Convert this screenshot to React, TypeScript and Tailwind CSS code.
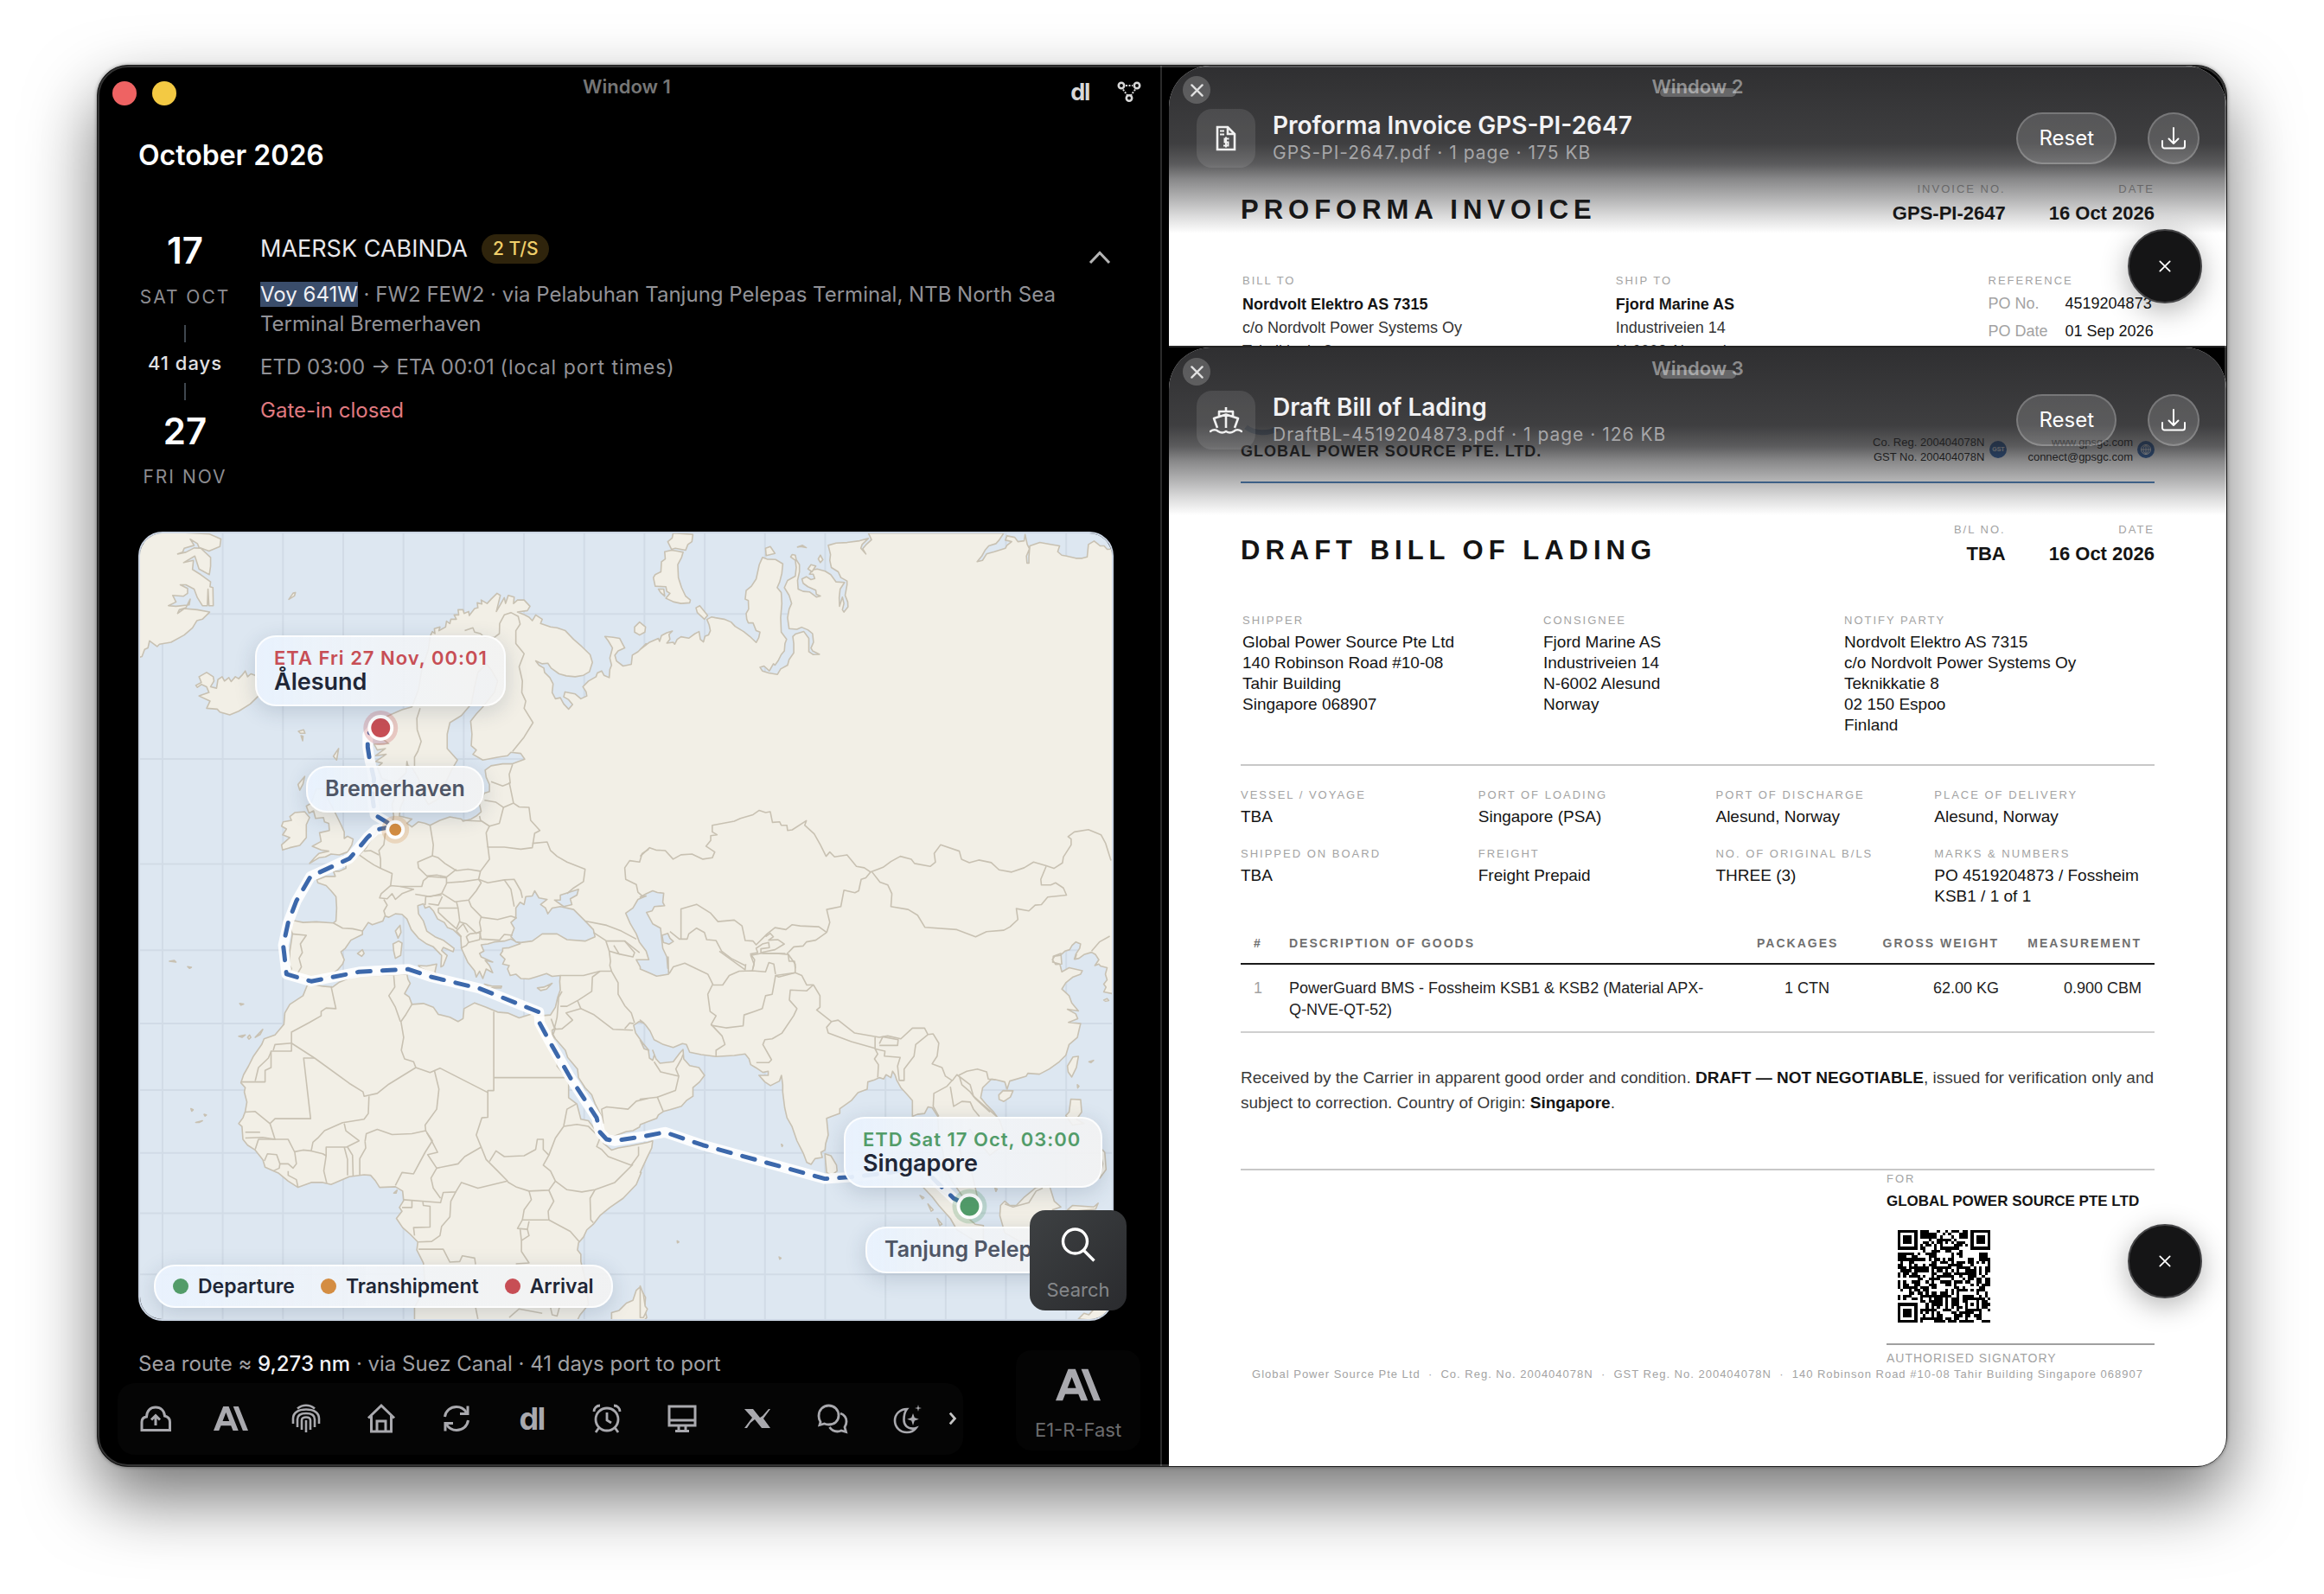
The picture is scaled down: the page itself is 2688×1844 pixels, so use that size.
import React from "react";
import { SiAnthropic } from "react-icons/si";

/* ------------------------------------------------------------------ */
/* Map geometry                                                        */
/* ------------------------------------------------------------------ */

/* The chart is traced on four overlapping sheets; each has an origin and a scale. */
const SHEETS: Record<string, [number, number, number, number]> = {
  A: [-10, -15, 600 / 1568, 1 / 3],
  B: [580, -15, 570 / 1568, 1 / 3],
  C: [-10, 485, 600 / 1568, 1 / 3],
  D: [580, 485, 600 / 1568, 1 / 3],
};

function trace(src: string, close = false): string {
  let sheet = SHEETS.A;
  const out: string[] = [];
  for (const tok of src.trim().split(/\s+/)) {
    if (SHEETS[tok]) {
      sheet = SHEETS[tok];
      continue;
    }
    const [x, y] = tok.split(",").map(Number);
    out.push((sheet[0] + x * sheet[2]).toFixed(1) + " " + (sheet[1] + y * sheet[3]).toFixed(1));
  }
  return "M" + out.join("L") + (close ? "Z" : "");
}

const LAND = [
  // Eurasia and Africa
  `A 905,405 912,388 920,395 918,378 935,372 932,385 952,372 955,352 965,360 968,345 985,345 978,330 992,330 990,312 1005,312 1008,325 1022,318 1024,332 1040,308 1050,305 1048,288 1062,292 1060,278 1078,290 1090,275 1108,255 1118,262 1112,290 1106,318 1120,290 1130,270 1134,290 1142,262 1160,268 1158,290 1170,278 1190,278 1208,300 1200,315 1170,320 1188,328 1205,338 1215,350 1225,330 1245,345 1240,360 1270,372 1290,375 1315,385 1340,415 1365,440 1390,468 1397,495 1388,528 1370,540 1345,545 1318,542 1296,535 1272,515 1262,498 1245,500 1225,490 1235,505 1250,515 1252,530 1268,548 1278,570 1275,600 1285,622 1300,618 1310,640 1325,658 1337,642 1325,625 1310,615 1314,598 1345,605 1362,622 1380,612 1378,598 1368,580 1385,560 1408,545 1412,532 1425,525 1432,540 1448,548 1450,520 1455,505 1450,480 1458,445 1445,420 1435,405 1460,408 1480,412 1488,430 1495,445 1475,455 1465,470 1470,490 1490,508 1515,502 1518,470 1535,458 1560,430
   B 0,450 30,425 58,412 62,422 68,402 85,392 103,386 92,398 95,415 85,428 105,425 110,432 118,415 130,406 155,411 175,395 188,388 192,415 202,424 207,404 218,400 224,385 220,365 213,346 228,337 240,340 268,345 290,355 303,370 330,388 350,405 370,426 378,410 382,390 370,385 360,358 345,358 340,345 338,325 346,310 345,280 335,275 338,245 355,230 370,205 380,155 390,130 405,136 432,137 455,152 452,185 445,215 437,235 450,252 452,290 448,340 450,390 467,415 462,430 460,455 450,468 440,490 430,505 425,500 412,525 395,508 382,512 390,525 410,532 438,537 448,518 470,505 475,485 490,462 490,430 487,405 495,397 522,388 538,412 538,458 552,468 572,467 550,455 545,445 553,425 550,395 535,382 515,373 500,380 475,378 470,340 475,310 483,290 475,262 460,235 470,210 495,195 498,165 495,140 480,128 485,120 495,122 498,138 508,155 508,180 502,210 504,240 520,248 540,250 562,268 575,264 562,258 560,244 535,232 520,220 516,205 530,197 545,207 557,203 552,188 540,188 550,173 565,170 590,178 608,190 625,215 652,217 638,240 635,270 636,300 645,268 650,290 645,312 650,320 663,302 662,285 654,262 660,225 660,212 640,200 632,180 610,165 605,140 607,120 600,88 625,80 660,78 700,72 728,64 708,85 704,98 720,118 710,100 722,84 738,68 728,45
   1160,45 1145,70 1135,82 1112,90 1100,105 1090,125 1075,145 1092,140 1105,118 1130,110 1165,98 1170,88 1185,75 1165,70 1170,55 1195,60 1205,75 1225,72 1228,50 1235,85 1242,100 1232,125 1234,150 1240,150 1240,128 1243,90 1275,78 1305,84 1338,90 1332,110 1345,122 1360,125 1390,133 1410,133 1426,128 1430,85 1448,73 1468,90 1480,90 1490,102 1520,100 1520,1450
   D 1440,150 1405,142 1412,125 1405,115 1415,100 1410,80 1415,58 1395,52 1390,45 1378,50 1390,30 1380,12 1368,4 1345,12 1330,25 1318,28 1322,12
   B 1385,1528 1390,1510 1402,1490 1405,1475 1390,1468 1378,1480 1370,1495 1355,1500 1340,1515 1322,1518 1315,1530 1325,1546 1345,1545
   D 1275,8 1252,18 1250,38 1272,45 1278,72 1300,58 1340,68 1335,80 1312,90 1290,110 1278,132 1300,155 1308,180 1328,208 1295,202 1320,218 1326,235 1298,248 1335,252 1330,275 1325,300 1300,325 1290,362 1270,385 1240,410 1210,428 1175,425 1170,435 1120,452 1112,480 1105,455 1080,448 1065,445 1038,475 1032,510 1050,535 1070,558 1090,590 1105,640 1095,680 1060,710 1045,690 1020,660 1000,620 978,640 968,690 980,740 1005,770 1015,820 1025,870 1000,880 975,850 945,800 925,760 918,700 905,650 902,575 885,545 872,542 862,565 840,568 825,575 825,520 810,500 790,475 778,450 772,430 765,418 760,440 745,430 738,445 725,440 710,448 690,455 688,480 660,492 640,520 605,548 605,565 580,575 565,582 570,640 562,670 560,692 548,700 552,718 530,722 518,742 505,735 495,705 475,660 460,610 445,580 438,545 432,490 432,465 428,432 422,452 395,468 378,455 360,432 388,432 388,418 372,422 350,405 335,395 330,375 318,358 285,363 230,367 185,360 150,352 140,325 128,322 100,335 70,325 42,308 30,278 15,255 0,240
   C 1553,250 1538,245 1522,258 1528,285 1550,320 1568,345
   D 0,310 12,340 25,345 28,372 38,380 43,360 38,345 48,375 60,390 100,385 120,355 130,342 132,375 150,398 178,405 195,432 180,455 160,475 160,505 140,520 125,540 110,545 90,552 70,558 55,570 50,582 20,595 0,604
   C 1540,612 1520,625 1500,628 1460,645 1435,640 1425,610 1425,575 1405,530 1395,500 1375,475 1355,440 1352,410 1322,370 1315,345 1285,305 1278,290 1285,268 1275,275 1276,295 1290,340 1292,375 1290,400 1315,435 1325,460 1325,510 1350,532 1362,585 1385,590 1405,620 1430,648 1430,668 1455,692 1475,685 1510,678 1565,665
   D 38,660 35,685 20,720 0,770
   C 1545,770 1530,812 1490,860 1450,892 1420,920 1400,950 1380,970 1370,995 1355,1015 1352,1040 1362,1055 1362,1080 1375,1140 1385,1230 1360,1265 1340,1310 858,1310 858,1240 890,1170 885,1085 865,1040 868,1012 845,985 822,962 803,930 820,905 812,892 825,868 822,835 800,820 752,822 740,800 725,780 705,778 660,785 605,812 580,805 545,805 505,822 475,800 445,772 405,752 398,725 375,692 352,675 338,655 335,610 325,600 338,580 345,558 350,525 342,490 345,475 332,458 340,430 355,400 370,365 395,325 402,305 435,292 462,255 465,215 480,185 520,155 533,118 560,118 580,122 610,125 630,108 655,96 690,85 740,85 800,82 835,80 838,98 845,112 828,148 842,160 850,185 885,182 915,195 930,220 965,230 990,245 1005,235 1008,200 1040,180 1075,195 1110,212 1140,215 1175,232 1215,218 1240,225 1270,222 1285,195 1292,160 1300,135 1298,105 1300,85 1275,88 1258,78 1225,90 1205,97 1180,95 1165,80 1148,85 1140,62 1145,50 1125,45 1132,28 1118,12 1125,0
   A 1125,1490 1145,1488 1178,1474 1150,1458 1130,1465 1100,1468 1080,1475 1060,1478 1068,1500
   C 1055,8 1060,20 1095,38 1072,32 1085,50 1095,75 1075,62 1065,95 1055,70 1045,90 1040,68 1020,40 1010,15
   A 1000,1490 998,1450 975,1425 958,1418 948,1400 928,1388 915,1360 903,1345 890,1350 885,1335 868,1342 870,1370 885,1395 895,1430 920,1450 945,1462 978,1490 975,1502 945,1487 940,1498 957,1515 945,1550 938,1555 940,1515 915,1485 895,1475 870,1455 848,1425 835,1388 820,1372 800,1370 780,1382 768,1378 762,1395 730,1408 718,1400 700,1430 700,1442 665,1462 648,1490 635,1502 645,1530
   C 640,45 625,65 610,78 590,90 560,98 545,112 530,95 508,88 478,88 485,60
   A 478,1545 480,1500 488,1440 478,1405 490,1393 520,1400 560,1398 612,1402 620,1395 622,1350 620,1310 605,1290 590,1272 565,1262 562,1252 590,1240 618,1240 612,1222 630,1222 650,1212 650,1192 672,1180 690,1165 712,1140 722,1120 735,1100 745,1080 770,1075 790,1060 795,1030 790,990 800,960 820,945 825,975 815,1000 812,1030 850,1040 835,1055 850,1068 870,1050 890,1055 905,1062 935,1045 965,1033 1000,1040 1005,1048 1030,1040 1045,1030 1060,1015 1055,990 1070,950 1085,945 1085,920 1075,895 1072,870 1090,855 1125,848 1155,848 1192,832 1180,812 1150,808 1140,820 1110,825 1065,835 1035,815 1045,800 1030,785 1032,745 1028,700 1045,675 1065,650 1100,600 1110,560 1090,520 1075,500 1050,530 1040,580 1030,640 1000,680 965,705 957,745 957,795 988,835 970,870 950,920 930,970 900,990 885,960 870,900 850,860 838,855 835,840 832,880 800,915 760,900 745,860 760,845 740,840 772,815 740,820 770,795 745,800 735,780 780,778 760,760 745,700 790,675 820,660 850,650 870,590 880,520 900,450`,
  // Greenland
  `A 15,35 235,48 271,66 268,92 235,108 205,95 200,82 178,66 190,88 160,98 155,112 140,118 165,112 190,97 210,98 240,130 240,160 236,190 205,170 192,125 158,148 188,140 185,172 210,190 240,215 238,232 247,235 248,298 235,298 232,240 230,298 215,298 200,270 190,240 165,225 148,225 170,238 170,255 158,265 125,262 135,285 112,298 135,300 175,295 178,275 165,305 145,312 140,325 160,308 200,312 237,320 215,345 198,350 185,375 160,400 120,425 85,432 78,440 55,420 50,445 40,450 32,475 15,480`,
  // Iceland, Jan Mayen, Faroe, Shetland
  `A 195,575 212,565 205,545 228,530 248,545 250,560 240,580 258,585 262,555 275,545 282,560 295,548 302,562 315,545 325,552 335,540 345,525 352,545 362,535 375,540 385,560 385,612 360,640 325,665 298,678 268,668 260,658 228,655 238,630 205,612 235,600 228,580 212,572 200,582`,
  `A 477,276 490,254 497,252 494,264`,
  `A 506,735 522,730 526,742 512,742`,
  `A 514,750 520,752 519,768`,
  `A 612,822 622,805 628,795 622,835`,
  // British Isles
  `A 560,935 598,935 590,960 605,990 618,1020 635,1060 645,1085 645,1108 655,1100 672,1110 668,1130 655,1155 630,1165 605,1162 588,1172 568,1175 540,1195 555,1175 568,1160 598,1152 575,1148 548,1135 575,1118 570,1088 600,1080 598,1055 585,1050 582,1035 558,1038 552,1012 538,1020 530,995 545,985`,
  `A 460,1050 485,1045 480,1032 495,1018 525,1015 540,1035 530,1060 530,1105 510,1132 480,1140 458,1148 455,1130 480,1105 458,1095 470,1075 455,1065`,
  `A 505,920 525,892 520,918 510,940`,
  // Mediterranean islands
  `A 793,1475 810,1465 820,1472 816,1515 800,1525 795,1500`,
  `A 800,1430 814,1410 817,1435 808,1455`,
  `A 685,1508 700,1495 705,1508 698,1518`,
  `C 870,50 895,52 925,45 920,72 925,85 875,58`,
  `C 1070,115 1095,122 1122,122 1120,128 1085,128`,
  `C 1230,128 1250,125 1275,112 1258,132 1240,137`,
  // Arctic islands
  `A 1525,372 1540,355 1558,372 1556,390 1540,400 1525,390`,
  `B 105,45 168,50 165,75 152,85 145,105 112,98 100,102 88,75 102,62`,
  `B 78,110 100,105 118,108 137,112 132,130 120,155 122,200 132,235 145,265 160,278 158,288 130,290 108,285 82,272 95,255 85,248 82,232 48,230 42,200 48,190 66,180 68,145 80,135`,
  `B 58,240 75,240 78,265 65,252`,
  `B 178,305 190,298 215,332 205,345 182,322`,
  `B 400,98 415,92 430,116 402,124`,
  `B 502,94 518,88 530,96 512,92`,
  `B 535,170 545,155 560,160 548,180`,
  `B 568,135 575,122 583,138 575,148`,
  // Indian Ocean and East Asia
  `D 560,705 578,712 595,745 597,765 580,780 565,770 562,735`,
  `D 1295,400 1312,368 1328,366 1322,405 1308,438 1297,420`,
  `D 1087,500 1100,485 1130,486 1122,508 1102,523 1088,516`,
  `D 1305,515 1335,517 1338,560 1322,585 1345,600 1310,605 1290,572 1300,560`,
  `D 1400,690 1408,700 1412,760 1393,790 1402,740 1396,710`,
  `D 852,815 890,815 935,855 965,880 990,925 1015,950 1040,955 1040,1010 1010,1005 960,970 940,930 905,885 885,855`,
  `D 1092,885 1105,870 1120,885 1140,885 1165,855 1200,822 1240,815 1255,870 1275,890 1250,900 1240,1000 1150,1010 1105,980 1090,920`,
  `D 1295,900 1310,885 1375,890 1388,877 1380,898 1310,905`,
  `D 1328,1280 1345,1260 1360,1265 1380,1240 1420,1235 1425,1290`,
  `D 1405,170 1415,165 1420,172 1410,174`,
  `C 1455,1285 1455,1258 1478,1250 1500,1225 1520,1215 1530,1180 1540,1170 1558,1205 1555,1245 1562,1275 1540,1300`,
  `D 0,1165 10,1195 15,1235 22,1245 10,1275 0,1275`,
  // Small islands of the eastern waters
  `D 848,850 860,858 855,862`,
  `D 872,880 888,900 882,905`,
  `D 900,930 915,950 908,955`,
  `D 1075,825 1082,828 1078,836`,
  `D 1325,465 1330,470 1326,476`,
  `D 1360,385 1374,380 1366,388`,
  `D 428,672 432,676 430,680`,
  `D 112,1008 117,1012 113,1015`,
  `D 421,1064 427,1068 423,1072`,
  // Atlantic islands
  `C 375,300 398,272 390,290`,
  `C 352,300 358,292 362,300 356,306`,
  `C 325,296 345,292 335,300`,
  `C 328,182 340,184 332,188`,
  `C 115,35 130,32 135,38`,
  `C 170,54 182,56 176,60`,
  `C 180,548 187,552 183,557`,
  `C 195,596 215,590 205,596`,
  `C 220,568 227,570 223,574`,
  `C 795,842 805,832 802,842`,
];

const WATER = [
  // Black Sea, Azov, Caspian, Garabogazkol
  `A 1150,1450 1160,1420 1150,1400 1165,1385 1165,1350 1178,1330 1190,1338 1195,1310 1215,1308 1222,1290 1235,1315 1260,1320 1240,1338 1255,1350 1262,1370 1275,1350 1300,1345 1340,1355 1375,1395 1400,1425 1405,1450 1375,1465 1320,1460 1290,1440 1245,1440 1215,1465 1180,1470 1165,1468`,
  `A 1282,1322 1300,1322 1300,1305 1355,1285 1350,1305 1330,1318 1335,1338 1310,1345`,
  `B 0,1312 20,1300 40,1290 55,1296 75,1298 72,1330 78,1342 45,1345 38,1360 20,1365 40,1405 65,1420 68,1450 72,1490 85,1520 88,1560 D 85,20 86,80 50,87 20,72 0,62 C 1542,55 1530,30 A 1568,1530 1560,1500 1540,1470 1530,1440 1512,1405 1498,1368 1520,1350 1535,1320 1560,1308`,
  `B 70,1445 88,1438 95,1455 106,1466 92,1476 74,1470`,
];

const BORDERS = [
  `A 875,655 865,690 866,730 878,770 868,805 858,825 858,860`,
  `A 1010,385 1035,375 1040,390 1058,395 1070,408 1100,408 1115,395 1116,360 1130,330 1150,322 1172,335 1178,362 1165,385 1165,430 1190,465 1175,510 1185,560 1183,600 1195,630 1190,655 1217,705 1190,755 1155,805`,
  `A 1155,850 1145,885 1148,915 1125,925 1090,910`,
  `A 1145,912 1158,985 1128,1000 1105,982 1070,975`,
  `A 1128,998 1115,1055 1085,1065 1058,1045 1055,1030`,
  `A 1005,1045 1060,1048`,
  `A 1158,985 1175,998 1205,1000 1210,1045 1238,1080 1222,1090 1215,1140 1180,1145 1130,1138 1080,1138 1075,1088 1085,1065`,
  `A 1215,1125 1260,1120 1270,1150 1290,1170 1320,1190 1375,1215 1370,1258 1340,1280 1320,1300`,
  `A 1080,1135 1085,1180 1058,1222 1052,1250 1080,1262 1130,1252 1160,1250 1180,1290 1185,1315`,
  `A 1058,1222 1020,1215 985,1220 950,1195 930,1175 912,1168 915,1130 905,1062`,
  `A 912,1168 868,1190 870,1210 895,1238 925,1235 955,1242 985,1215`,
  `A 770,1085 765,1130 750,1150 755,1180 755,1212 790,1230 785,1275`,
  `A 690,1165 715,1185 735,1200 755,1212`,
  `A 705,1152 725,1150 750,1165`,
  `A 785,1272 757,1300 752,1315 775,1318 790,1300 800,1320 820,1300 855,1285 815,1275 785,1272`,
  `A 815,1275 880,1275 885,1255 900,1240 955,1245 955,1265 940,1300 905,1310 860,1302`,
  `A 765,1320 775,1340 765,1360 770,1378`,
  `A 955,1262 1005,1258 1052,1250 1060,1262 1045,1290 1022,1322 980,1328 942,1300`,
  `A 890,1340 892,1310 940,1305`,
  `A 900,1335 930,1340 942,1310`,
  `A 930,1350 990,1350 995,1395 985,1422 955,1392 930,1365 930,1350`,
  `A 985,1328 990,1350`,
  `A 1022,1322 1030,1345 1060,1380 1055,1400 1060,1430 1045,1438 1015,1405 995,1398`,
  `A 1060,1382 1110,1390 1150,1378 1168,1385`,
  `A 1130,1252 1150,1285 1160,1345`,
  `A 1055,1432 1060,1458 1115,1462 1130,1442 1155,1445`,
  `A 1025,1440 1058,1435 1055,1460 1022,1470 1015,1450 1025,1440`,
  `A 1000,1450 985,1430 1005,1405 1020,1435`,
  `A 998,1490 1015,1480 1022,1468`,
  `A 612,1402 640,1420 670,1422 700,1430`,
  `A 486,1440 530,1445 512,1475 518,1505 508,1525 515,1555 C 505,75 505,88`,
  `A 1375,1395 1440,1410 1485,1430 1530,1458`,
  `A 1400,1435 1440,1465 1495,1465 1540,1505`,
  `A 1438,1465 1448,1500 1478,1510 1462,1480`,
  `A 1478,1510 1520,1520 1525,1505 1495,1465`,
  `A 1448,1500 1452,1535 C 1450,50 1455,70`,
  `A 1568,1145 1548,1160 1540,1190 1510,1185 1495,1210 1498,1250 1530,1268 1535,1295 1550,1310`,
  `B 0,1170 30,1140 50,1148 80,1150 105,1180 130,1165 165,1162 200,1180 230,1175 238,1155 210,1135 225,1115 225,1098 245,1095 230,1085 230,1062 300,1048 320,1038 360,1025 380,1010 400,1018 415,1015 422,1052 445,1050 450,1062 468,1062 470,1080 485,1078 530,1046 525,1062 555,1092 575,1130 593,1170 605,1155 620,1172 660,1165 690,1205 715,1210 735,1225`,
  `B 735,1225 720,1245 705,1250 697,1290 685,1297 650,1288 640,1345 595,1355 605,1400 595,1435`,
  `B 595,1435 560,1462 530,1468 520,1482 490,1485 472,1505`,
  `B 595,1435 570,1415 510,1412 485,1408 465,1425 430,1418 405,1440 370,1478 360,1465 335,1463 325,1412 300,1392 248,1397 225,1368 180,1337 130,1353 130,1458`,
  `B 95,1432 125,1458 150,1458 155,1440 180,1420 205,1435 212,1460 242,1463 260,1500 290,1525 335,1550`,
  `B 400,1450 415,1438 425,1450 410,1462 440,1460 460,1475 430,1495 385,1505 385,1492 412,1488 410,1470 390,1475 370,1490 375,1505 352,1510 365,1530 360,1560`,
  `B 390,1508 435,1508 472,1512 475,1535 492,1535 495,1560`,
  `B 735,1225 775,1208 800,1188 830,1170 865,1180 875,1195 925,1205 942,1190 938,1160 958,1130 1018,1152 1025,1180 1050,1192 1080,1183 1120,1192 1145,1217 1185,1225 1225,1210 1255,1190 1295,1203 1320,1212 1347,1193 1350,1172 1375,1130 1375,1110 1365,1102 1385,1085 1430,1077 1470,1095 1485,1125 1502,1185`,
  `B 740,1225 765,1260 790,1270 803,1300 800,1345 855,1355 885,1375 908,1417 1010,1425 1070,1450 1105,1432 1160,1427 1180,1415 1205,1390 1200,1352 1240,1360 1260,1340 1280,1338 1300,1312 1360,1305 1350,1280 1325,1262 1310,1270 1280,1270 1278,1250 1295,1205`,
  `B 1440,1500 1465,1468 1498,1448`,
  `C 605,122 615,175 620,200 590,198 575,210 575,225 540,248 485,282 485,348 423,348 423,405 405,415 405,455 332,455`,
  `C 485,320 435,325 430,345`,
  `C 423,350 415,372 385,405 375,452`,
  `C 485,320 555,372 660,460 702,490 705,505 745,495 780,463 862,405`,
  `C 555,372 522,372 543,583 435,583 420,600`,
  `C 795,85 798,125 780,155 800,195 815,245`,
  `C 850,185 832,220 817,245 825,300 818,345 828,375 855,385 862,405 905,422 935,407 1080,492 1080,485 1098,485 1098,210`,
  `C 1098,440 1320,440`,
  `C 1080,492 1080,578 1062,580 1045,640 1060,682`,
  `C 918,415 932,480 925,550 890,605 892,625 850,635 790,638 745,620 712,635 708,662`,
  `C 720,505 718,565 705,585 640,597 585,625 565,650 550,665 545,695 580,705 590,712 590,682 652,682 690,660 650,625 645,600`,
  `C 345,560 375,558 420,600 435,655 398,648 345,650`,
  `C 345,630 390,630`,
  `C 375,690 385,655 435,655 475,655 495,700 500,740 490,755 475,740 450,740 440,708 412,705 403,730`,
  `C 450,740 448,755 430,765`,
  `C 475,765 475,780 500,795 505,822`,
  `C 495,698 520,692 545,695`,
  `C 590,712 583,765 592,808`,
  `C 645,682 655,725 655,780`,
  `C 655,682 670,710 672,783`,
  `C 692,780 692,722 710,685 708,662`,
  `C 892,625 912,660 890,700 855,775 820,770 800,815`,
  `C 895,632 912,665 928,700 898,708 925,755 908,790 915,825 937,860`,
  `C 925,755 990,740 1010,715 1060,682 1075,725 1110,765 1140,800 1050,825 1000,805 983,838 945,840 937,875 825,865`,
  `C 1085,732 1105,695 1130,715 1190,712 1225,690 1230,655 1248,655 1248,690 1265,710 1248,745 1270,765 1285,800 1265,832 1205,835 1165,820 1140,803`,
  `C 1265,710 1285,650 1310,610 1350,603 1385,610 1420,650 1410,680 1425,690 1445,715 1515,745 1537,710 1537,680`,
  `C 1310,608 1320,550 1348,532`,
  `C 1520,742 1465,805 1405,830 1365,838 1320,830 1285,800`,
  `C 1405,830 1390,860 1392,935 1400,945`,
  `C 1205,835 1212,865 1190,900 1185,935 1265,935 1330,975 1358,1012`,
  `C 1265,832 1280,870 1263,905 1265,935`,
  `C 1185,935 1170,965 1200,968 1205,940`,
  `C 1200,968 1205,990 1182,1007 1178,968`,
  `C 1182,1007 1182,1045 1205,1085 1165,1088`,
  `C 820,892 850,892 850,868`,
  `C 883,872 885,885 905,888 905,960 855,962 858,990`,
  `C 983,838 968,870 965,925 940,958 935,990 910,1010 870,1012`,
  `C 870,1037 945,1037 965,1082 995,1080 1003,1060 1040,1068 1043,1090`,
  `C 1300,192 1320,192 1355,170 1395,140 1397,90 1420,70`,
  `C 1352,172 1362,200 1317,215 1337,240 1305,270 1280,272`,
  `C 1300,85 1370,85 1420,70 1455,70 1475,110 1475,150 1495,190 1515,215 1525,250`,
  `C 1362,200 1400,220 1460,272 1520,275`,
  `C 1495,270 1510,250 1522,252`,
  `C 1272,235 1282,268 1290,230 1295,160 1305,140`,
  `C 1430,600 1425,550 1440,542 1505,550 1530,522 1568,512 D 0,515 52,508 70,558`,
  `C 1043,1240 1050,1280`,
  `C 1145,1275 1175,1245 1245,1260`,
  `C 1270,1240 1275,1265 1290,1270 1297,1240`,
  `D 52,508 107,485 117,435 62,420 42,385`,
  `D 117,435 108,410 125,375 130,360`,
  `D 88,78 100,55 135,42 205,80 220,115 205,150 212,210 230,225 215,255 248,295 257,325 230,345 230,367`,
  `D 220,118 250,118 270,85 300,70 340,68 380,72 390,40 405,45 410,80`,
  `D 240,0 318,65 320,45`,
  `D 215,258 260,267 312,260 315,222 345,210 370,200 380,155 400,150 408,100 410,85 470,75 470,45 445,5`,
  `D 410,85 420,90 470,75 490,85 505,118 525,117`,
  `D 340,68 345,45 335,15 365,8 440,8`,
  `D 525,117 505,138 455,135 452,170 475,200 465,225 430,285 400,305 378,308 372,325 398,378 390,388 352,388`,
  `D 525,117 545,155 545,195 535,205 580,245 600,240 650,285 725,300 750,295 790,305 825,268 862,268 872,290`,
  `D 580,245 565,265 570,285 640,315 712,338 712,300`,
  `D 725,322 735,298 782,308 780,328 725,328`,
  `D 872,290 835,325 830,365 800,410 800,450 785,450 780,400 788,370 740,365 742,348 712,340 720,358 710,375 722,395 720,440`,
  `D 872,290 888,288 905,320 900,365 885,392 915,405 925,435 945,450 930,470 890,495 888,540 905,575`,
  `D 945,452 960,430 1000,465 1010,505 1045,540 1080,575`,
  `D 940,472 950,540 975,523 1000,525 1010,550 1028,575`,
  `D 965,432 990,418 1022,410 1050,420 1055,445 1078,448`,
  `D 968,438 975,465 1000,490 1015,512 1060,560`,
  `D 1105,880 1130,890 1178,875 1200,835 1220,825`,
];

const ROUTE = trace(
  `A 755,722 730,728 716,748 716,790 722,835 735,900 730,960 738,1026 775,1052 799,1078 775,1070 740,1078 715,1105 690,1140 660,1178 600,1210 543,1240 500,1325 475,1400 460,1480
   C 463,10 470,80 545,105 690,72 840,63 910,90 1055,130 1235,212 1237,250 1270,320 1330,440 1410,580 1420,630 1440,655 1465,660 1560,643
   D 75,630 190,675 560,792 640,786 760,770 850,745 900,805 950,860 998,887`
);

const MERIDIANS = Array.from({ length: 16 }, (_, i) => 26 + i * 69.87);
const PARALLELS = [94, 262, 384, 484, 569, 646, 719, 789, 860];

function Marker({ x, y, big, color }: { x: number; y: number; big?: boolean; color: string }) {
  return (
    <g>
      <circle cx={x} cy={y} r={big ? 20 : 16} fill={color} opacity={0.25} />
      <circle cx={x} cy={y} r={big ? 15 : 11} fill="#fff" />
      <circle cx={x} cy={y} r={big ? 11 : 7} fill={color} />
    </g>
  );
}

function WorldChart() {
  return (
    <svg viewBox="0 0 1127 912" preserveAspectRatio="xMidYMid slice" className="block h-full w-full" role="img" aria-label="Sea route">
      <rect width="1127" height="912" fill="#dde7f1" />
      <g stroke="#d1dbe6" strokeWidth="2">
        {MERIDIANS.map((x) => (
          <line key={x} x1={x} x2={x} y1="0" y2="912" />
        ))}
        {PARALLELS.map((y) => (
          <line key={y} x1="0" x2="1127" y1={y} y2={y} />
        ))}
      </g>
      <g stroke="#c8c1b2" strokeWidth="1.6" strokeLinejoin="round">
        {LAND.map((d, i) => (
          <path key={i} d={trace(d, true)} fill="#f2efe6" />
        ))}
        {WATER.map((d, i) => (
          <path key={i} d={trace(d, true)} fill="#dde7f1" />
        ))}
        {BORDERS.map((d, i) => (
          <path key={i} d={trace(d)} fill="none" />
        ))}
      </g>
      <path d={ROUTE} fill="none" stroke="#fff" strokeWidth="12" strokeLinejoin="round" strokeLinecap="round" opacity="0.9" />
      <path d={ROUTE} fill="none" stroke="#3c68ab" strokeWidth="5" strokeLinejoin="round" strokeLinecap="round" strokeDasharray="15 14" />
      <Marker x={279} y={226} big color="#c74e55" />
      <Marker x={296} y={344} color="#d48d42" />
      <Marker x={962} y={781} big color="#529c69" />
    </svg>
  );
}

/* ------------------------------------------------------------------ */
/* Icons                                                               */
/* ------------------------------------------------------------------ */

function Glyph({ sw = 3, children }: { sw?: number; children: React.ReactNode }) {
  return (
    <svg viewBox="0 0 36 36" className="size-9" fill="none" stroke="currentColor" strokeWidth={sw} strokeLinejoin="miter" aria-hidden="true">
      {children}
    </svg>
  );
}

const CloudUp = () => (
  <Glyph>
    <path d="M2 31.500V22c0-3 2-5.500 5.500-6C8 9 12 5 18 5s10 4 10.500 10c3.500.800 6 3.500 6 7v9.500z" />
    <path d="M18 26V15M13 19.500l5-5 5 5" />
  </Glyph>
);
const Print = () => (
  <Glyph sw={2.6}>
    <path d="M8 6.500C14 1.500 22 1.500 28 6.500" />
    <path d="M3 24v-6C3 11 9.500 7.500 18 7.500S33 11 33 18v6" />
    <path d="M8 28v-9c0-5 4-7 10-7s10 2 10 7v9" />
    <path d="M13 31V20c0-2.500 2-3.500 5-3.500s5 1 5 3.500v11" />
    <path d="M18 20v14" />
  </Glyph>
);
const House = () => (
  <Glyph>
    <path d="M3 17.500 18 3l15 14.500" />
    <path d="M6.500 15v18h23V15" />
    <path d="M13 33V21h10v12" />
  </Glyph>
);
const Sync = () => (
  <Glyph>
    <path d="M4.500 16C5.500 9 11 4.500 18 4.500c5 0 9 2.500 11.500 6.500M31.500 20c-1 7-6.500 11.500-13.500 11.500-5 0-9-2.500-11.500-6.500" />
    <path d="M31 3.500v9h-9M5 32.500v-9h9" />
  </Glyph>
);
const Alarm = () => (
  <Glyph sw={2.8}>
    <circle cx="18" cy="19" r="13" />
    <path d="M18 11v9l5 3M8.500 29 5 34M27.500 29l3.500 5M3 10c0-4 3-7 7-7M33 10c0-4-3-7-7-7" />
  </Glyph>
);
const Desktop = () => (
  <Glyph>
    <path d="M3 4h30v22H3zM3 20h30M14 26v6M22 26v6M10 32.500h16" />
  </Glyph>
);
const CrossLogo = () => (
  <svg viewBox="0 0 36 36" className="size-9" fill="currentColor" aria-hidden="true">
    <path d="M3 7h10l8 10 3-2L31 7h2l-8 11 8 11H23l-8-10-5 4-4 6H3l9-12z" />
  </svg>
);
const Chats = () => (
  <Glyph sw={2.8}>
    <path d="M4 22c-1.500-2-2-4.500-2-7C2 8 7 3 13.500 3S25 8 25 14.500 20 25 13.500 25c-2 0-3.500-.300-5-1L3 25.500z" />
    <path d="M27 12c4 1.500 7 5 7 9.500 0 2.500-.700 4.500-2 6.500l1.500 5.500L28 32c-1.500.700-3 1-4.500 1-3.500 0-7-2-9-5" />
  </Glyph>
);
const MoonStar = () => (
  <Glyph sw={2.6}>
    <path d="M17 7C9 7 3 13 3 20.500S9 34 17 34c4.500 0 8-1.500 10.500-5-1.500.500-3 .600-4 .600-6 0-10-4-10-10 0-5 1-9.500 3.500-12.600z" />
    <path d="M24 12l1.800 5 5 1.800-5 1.800L24 26l-1.800-5.400-5-1.800 5-1.800zM30 2l.8 3.200L34 6l-3.200.800L30 10l-.8-3.200L26 6l3.200-.800z" fill="currentColor" stroke="none" />
  </Glyph>
);

const DOCK: { label: string; icon: React.ReactNode }[] = [
  { label: "Upload", icon: <CloudUp /> },
  { label: "Anthropic", icon: <SiAnthropic className="size-10" /> },
  { label: "Fingerprint", icon: <Print /> },
  { label: "Home", icon: <House /> },
  { label: "Sync", icon: <Sync /> },
  { label: "Downloads", icon: <span className="text-[36px] leading-9 font-bold tracking-tighter">dl</span> },
  { label: "Alarm", icon: <Alarm /> },
  { label: "Desktop", icon: <Desktop /> },
  { label: "X", icon: <CrossLogo /> },
  { label: "Chats", icon: <Chats /> },
  { label: "Night", icon: <MoonStar /> },
];

/* ------------------------------------------------------------------ */
/* Left window                                                         */
/* ------------------------------------------------------------------ */

const GLASS =
  "absolute flex border-2 border-white/80 bg-gradient-to-r from-[#e9f2fd]/95 via-[#f1f4f8]/90 to-[#f3f3f3]/90 shadow-[0_6px_24px_rgba(40,60,90,0.18)]";

function LegendItem({ dot, children }: { dot: string; children: string }) {
  return (
    <span className="flex items-center gap-[11px]">
      <span className={"size-[18px] rounded-full " + dot} />
      {children}
    </span>
  );
}

function RouteMap() {
  return (
    <div className="relative mt-[49px] aspect-[1127/912] overflow-hidden rounded-[28px] border-2 border-[#ccd6e4]">
      <WorldChart />
      <div className={GLASS + " top-[118px] left-[133px] h-[82px] w-[290px] flex-col rounded-3xl px-5 pt-[10px]"}>
        <span className="text-[22px] leading-7 font-semibold tracking-[1px] whitespace-nowrap text-[#c74e55]">ETA Fri 27 Nov, 00:01</span>
        <span className="text-[27px] leading-7 font-semibold text-[#202636]">Ålesund</span>
      </div>
      <div className={GLASS + " top-[269px] left-[192px] h-[54px] w-[206px] items-center justify-center rounded-3xl"}>
        <span className="text-[25px] font-semibold text-[#4f5666]">Bremerhaven</span>
      </div>
      <div className={GLASS + " top-[675px] left-[814px] h-[82px] w-[299px] flex-col rounded-3xl px-5 pt-[10px]"}>
        <span className="text-[22px] leading-7 font-semibold tracking-[1px] whitespace-nowrap text-[#529c69]">ETD Sat 17 Oct, 03:00</span>
        <span className="text-[27px] leading-7 font-semibold text-[#202636]">Singapore</span>
      </div>
      <div className={GLASS + " top-[802px] left-[839px] h-[54px] items-center rounded-3xl px-5"}>
        <span className="text-[25px] font-semibold whitespace-nowrap text-[#4f5666]">Tanjung Pelepas</span>
      </div>
      <div className={GLASS + " top-[846px] left-4 h-[50px] items-center gap-[30px] rounded-3xl px-5 text-[23px] font-semibold text-[#202636]"}>
        <LegendItem dot="bg-[#529c69]">Departure</LegendItem>
        <LegendItem dot="bg-[#d48d42]">Transhipment</LegendItem>
        <LegendItem dot="bg-[#c74e55]">Arrival</LegendItem>
      </div>
    </div>
  );
}

function DateColumn() {
  return (
    <div className="flex w-[108px] shrink-0 flex-col items-center text-[22px] leading-7 text-[#8c8c91]">
      <span className="text-[42px] leading-[48px] font-semibold text-white">17</span>
      <span className="mt-4 text-[21px] tracking-[2px] whitespace-nowrap">SAT OCT</span>
      <span className="mt-[18px] h-5 w-[2px] bg-[#3f474f]" />
      <span className="mt-[10px] font-medium tracking-[1px] whitespace-nowrap text-[#e0e0e4]">41 days</span>
      <span className="mt-[9px] h-5 w-[2px] bg-[#3f474f]" />
      <span className="mt-3 text-[42px] leading-[48px] font-semibold text-white">27</span>
      <span className="mt-[15px] text-[21px] tracking-[2px] whitespace-nowrap">FRI NOV</span>
    </div>
  );
}

function ScheduleWindow() {
  return (
    <section className="relative w-1/2 overflow-hidden rounded-l-[34px] border-r-2 border-[#2b2b2b] bg-black">
      <header className="grid h-[65px] grid-cols-3 pt-[18px] pr-[22px] pl-[17px]">
        <div className="flex gap-[18px]">
          <button aria-label="Close" className="size-7 rounded-full bg-[#ee6363]" />
          <button aria-label="Minimise" className="size-7 rounded-full bg-[#f3c943]" />
        </div>
        <h2 className="text-center text-[22px] leading-3 font-semibold text-[#767676]">Window 1</h2>
        <div className="flex items-start justify-end gap-8 text-[#d8d8d8]">
          <button aria-label="Downloads" className="text-[27px] leading-[26px] font-bold tracking-tighter">
            dl
          </button>
          <button aria-label="Graph">
            <svg viewBox="0 0 28 24" className="h-6 w-7" fill="none" stroke="currentColor" strokeWidth="2.600">
              <circle cx="5" cy="5" r="3.200" />
              <circle cx="23" cy="5" r="3.200" />
              <circle cx="14" cy="19.500" r="3.200" />
              <path d="M10 5h8M7 9.500l5 7M21 9.500l-5 7" strokeDasharray="2 1.500" strokeWidth="2" />
            </svg>
          </button>
        </div>
      </header>

      <div className="pr-[54px] pl-[47px]">
        <h1 className="mt-[19px] text-[32px] leading-10 font-semibold text-white">October 2026</h1>

        <article className="mt-[66px] flex">
          <DateColumn />
          <div className="ml-[33px] flex-1 pt-[5px] text-[24px] leading-[34px] text-[#929297]">
            <div className="flex items-center gap-4">
              <h3 className="text-[27px] text-[#e8e8ec]">MAERSK CABINDA</h3>
              <span className="rounded-full bg-[#2f240c] px-[13px] text-[21px] font-medium text-[#f0cf6a]">2 T/S</span>
            </div>
            <p className="mt-[19px]">
              <mark className="bg-[#3a4d6b] text-[#f0f0f4]">Voy 641W</mark> · FW2 FEW2 · via Pelabuhan Tanjung Pelepas Terminal, NTB North Sea Terminal Bremerhaven
            </p>
            <p className="mt-4">
              ETD 03:00 → ETA 00:01 <span className="text-[23px] tracking-[1px]">(local port times)</span>
            </p>
            <p className="mt-4 text-[#e07a80]">Gate-in closed</p>
          </div>
          <button aria-label="Collapse" className="mt-[18px] mr-px flex size-7 shrink-0 items-center justify-center text-[#b4b4b4]">
            <svg viewBox="0 0 28 28" className="size-7" fill="none" stroke="currentColor" strokeWidth="3">
              <path d="M2 20 13 8.500 24 20" />
            </svg>
          </button>
        </article>

        <RouteMap />

        <p className="mt-[34px] text-[24px] leading-8 text-[#a0a0a4]">
          Sea route ≈ <strong className="font-medium text-[#f0f0f4]">9,273 nm</strong> · via Suez Canal · 41 days port to port
        </p>
      </div>

      <nav className="mt-[6px] mr-[228px] ml-[23px] flex h-[83px] items-center rounded-[20px] bg-[#050505] pr-1 pl-6 text-[#a9a9ae]">
        <div className="flex flex-1 items-center justify-between">
          {DOCK.map((d) => (
            <button key={d.label} aria-label={d.label} className="flex size-10 items-center justify-center">
              {d.icon}
            </button>
          ))}
        </div>
        <button aria-label="More" className="ml-6 flex w-4 justify-center text-[#c4c4c4]">
          <svg viewBox="0 0 12 20" className="h-4 w-3" fill="none" stroke="currentColor" strokeWidth="3.500">
            <path d="M2 2l7 8-7 8" />
          </svg>
        </button>
      </nav>

      <div className="absolute right-[23px] bottom-[18px] flex flex-col items-center gap-[46px] text-[22px] leading-7">
        <button className="flex h-[116px] w-28 flex-col items-center justify-between rounded-[18px] bg-gradient-to-br from-[#3e4143] to-[#2a2b2e] pt-5 pb-[10px] text-[#85878a]">
          <svg viewBox="0 0 40 40" className="size-10 text-white" fill="none" stroke="currentColor" strokeWidth="3.400">
            <circle cx="16.500" cy="16" r="14" />
            <path d="M26.500 26.500 38.500 38.500" />
          </svg>
          Search
        </button>
        <button className="flex h-[116px] w-36 flex-col items-center justify-between rounded-[18px] bg-[#040404] pt-[14px] pb-[10px] text-[#6c6c6e]">
          <SiAnthropic className="size-[52px] text-[#a9a9ae]" />
          E1-R-Fast
        </button>
      </div>
    </section>
  );
}

/* ------------------------------------------------------------------ */
/* Document windows                                                    */
/* ------------------------------------------------------------------ */

function CloseX({ cls }: { cls: string }) {
  return (
    <svg viewBox="0 0 16 16" className={cls} fill="none" stroke="currentColor" strokeLinecap="round">
      <path d="M1.500 1.500l13 13M14.500 1.500l-13 13" />
    </svg>
  );
}

function DocumentWindow({
  name,
  title,
  meta,
  icon,
  fab,
  className,
  children,
}: {
  name: string;
  title: string;
  meta: string;
  icon: React.ReactNode;
  fab: string;
  className: string;
  children: React.ReactNode;
}) {
  return (
    <section className={"relative overflow-hidden rounded-t-[48px] bg-white " + className}>
      <div className="px-[83px] font-['Liberation_Sans',Arial,sans-serif] text-[#141414]">{children}</div>

      <header className="absolute inset-x-0 top-0 h-[194px] bg-[linear-gradient(180deg,rgba(34,34,36,0.94)_0px,rgba(34,34,36,0.87)_90px,rgba(34,34,36,0.74)_114px,rgba(34,34,36,0.54)_131px,rgba(34,34,36,0.34)_154px,rgba(34,34,36,0.16)_174px,rgba(34,34,36,0)_194px)]">
        <div className="flex justify-center pt-[26px]">
          <span className="h-[10px] w-[88px] rounded-full bg-white/25" />
        </div>
        <h2 className="absolute inset-x-0 top-[10px] text-center text-[22px] leading-7 font-semibold text-white/45">{name}</h2>
        <button aria-label={"Close " + name} className="absolute top-3 left-4 flex size-8 items-center justify-center rounded-full bg-white/20 text-[#e0e0e0]">
          <CloseX cls="size-[15px] stroke-[2.500]" />
        </button>
        <div className="mt-[14px] flex items-center pr-[31px] pl-8">
          <span className="flex size-[68px] items-center justify-center rounded-[18px] bg-white/10 text-[#f0f0f0]">{icon}</span>
          <div className="ml-5 flex-1">
            <h3 className="text-[28px] leading-8 font-semibold text-[#f2f2f4]">{title}</h3>
            <p className="mt-[2px] text-[21px] leading-7 tracking-[1px] text-[#a6a6a8]">{meta}</p>
          </div>
          <button className="h-[60px] rounded-full border-2 border-white/20 bg-white/15 px-6 text-[24px] text-white">Reset</button>
          <button aria-label={"Download " + title} className="ml-9 flex size-[60px] items-center justify-center rounded-full border-2 border-white/20 bg-white/15 text-white">
            <svg viewBox="0 0 28 26" className="h-[26px] w-7" fill="none" stroke="currentColor" strokeWidth="2" strokeLinecap="round" strokeLinejoin="round">
              <path d="M14 1v18M8.500 13.500 14 19l5.500-5.500M1 16v6a2.500 2.500 0 0 0 2.500 2.500h21A2.500 2.500 0 0 0 27 22v-6" />
            </svg>
          </button>
        </div>
      </header>

      <button
        aria-label="Dismiss"
        className={"absolute right-7 flex size-[86px] items-center justify-center rounded-full border-2 border-[#454547] bg-[#151516] text-white shadow-[0_8px_32px_rgba(0,0,0,0.3)] " + fab}
      >
        <CloseX cls="size-[14px] stroke-2" />
      </button>
    </section>
  );
}

const LABEL = "text-[13px] leading-5 tracking-[2px] text-[#a3a3a3] whitespace-nowrap";

function Stamp({ label, value }: { label: string; value: string }) {
  return (
    <div className="text-right">
      <div className={LABEL}>{label}</div>
      <div className="mt-1 text-[22px] leading-7 font-bold whitespace-nowrap">{value}</div>
    </div>
  );
}

function DocTitle({ title, no, value }: { title: string; no: string; value: string }) {
  return (
    <div className="flex items-end">
      <h1 className="flex-1 text-[31px] leading-9 font-bold tracking-[6px] whitespace-nowrap">{title}</h1>
      <div className="flex gap-[50px]">
        <Stamp label={no} value={value} />
        <Stamp label="DATE" value="16 Oct 2026" />
      </div>
    </div>
  );
}

function Party({ label, lines }: { label: string; lines: string[] }) {
  return (
    <div>
      <div className={LABEL}>{label}</div>
      <div className="mt-[3px] text-[19px] leading-6">
        {lines.map((l) => (
          <div key={l}>{l}</div>
        ))}
      </div>
    </div>
  );
}

function Invoice() {
  return (
    <div className="pt-[133px]">
      <DocTitle title="PROFORMA INVOICE" no="INVOICE NO." value="GPS-PI-2647" />
      <div className="mt-[54px] grid grid-cols-[433fr_432fr_193fr] pl-[2px]">
        <div>
          <div className={LABEL}>BILL TO</div>
          <div className="mt-1 text-[18px] leading-[27px] text-[#333]">
            <strong className="text-[#141414]">Nordvolt Elektro AS 7315</strong>
            <div>c/o Nordvolt Power Systems Oy</div>
            <div>Teknikkatie 8</div>
          </div>
        </div>
        <div>
          <div className={LABEL}>SHIP TO</div>
          <div className="mt-1 text-[18px] leading-[27px] text-[#333]">
            <strong className="text-[#141414]">Fjord Marine AS</strong>
            <div>Industriveien 14</div>
            <div>N-6002 Alesund</div>
          </div>
        </div>
        <div>
          <div className={LABEL}>REFERENCE</div>
          <dl className="grid grid-cols-[89px_1fr] text-[18px] leading-8 whitespace-nowrap">
            <dt className="text-[#a3a3a3]">PO No.</dt>
            <dd>4519204873</dd>
            <dt className="text-[#a3a3a3]">PO Date</dt>
            <dd>01 Sep 2026</dd>
          </dl>
        </div>
      </div>
    </div>
  );
}

/* QR symbol, 33 modules a side. */
const QR_SIZE = 33;
function qrCells(): [number, number][] {
  const cells: [number, number][] = [];
  const finder = (x: number, y: number, ox: number, oy: number) => {
    const dx = x - ox;
    const dy = y - oy;
    if (dx < -1 || dy < -1 || dx > 7 || dy > 7) return null;
    if (dx < 0 || dy < 0 || dx > 6 || dy > 6) return false;
    const ring = Math.max(Math.abs(dx - 3), Math.abs(dy - 3));
    return ring !== 2;
  };
  let seed = 2647;
  for (let y = 0; y < QR_SIZE; y++) {
    for (let x = 0; x < QR_SIZE; x++) {
      seed = (seed * 1103515245 + 12345) % 2147483648;
      let on: boolean = (seed >> 16) % 100 < 52;
      for (const [ox, oy] of [[0, 0], [26, 0], [0, 26]]) {
        const f = finder(x, y, ox, oy);
        if (f !== null) on = f;
      }
      const a = Math.max(Math.abs(x - 26), Math.abs(y - 26));
      if (a <= 2) on = a !== 1;
      if (on) cells.push([x, y]);
    }
  }
  return cells;
}

function QrCode() {
  return (
    <svg viewBox="0 0 33 33" className="size-[107px]" shapeRendering="crispEdges" role="img" aria-label="QR code">
      {qrCells().map(([x, y]) => (
        <rect key={x + "-" + y} x={x} y={y} width="1" height="1" fill="#000" />
      ))}
    </svg>
  );
}

const DETAILS: { label: string; value: string }[] = [
  { label: "VESSEL / VOYAGE", value: "TBA" },
  { label: "PORT OF LOADING", value: "Singapore (PSA)" },
  { label: "PORT OF DISCHARGE", value: "Alesund, Norway" },
  { label: "PLACE OF DELIVERY", value: "Alesund, Norway" },
  { label: "SHIPPED ON BOARD", value: "TBA" },
  { label: "FREIGHT", value: "Freight Prepaid" },
  { label: "NO. OF ORIGINAL B/LS", value: "THREE (3)" },
  { label: "MARKS & NUMBERS", value: "PO 4519204873 / Fossheim KSB1 / 1 of 1" },
];

const TH = "pb-[13px] text-[14px] leading-5 font-bold tracking-[2px] text-[#707070] whitespace-nowrap";

function BillOfLading() {
  return (
    <div className="relative pt-[101px]">
      <svg viewBox="0 0 40 14" className="absolute top-[88px] left-1 h-[14px] w-10 opacity-50" fill="none" stroke="#2b5c9c" strokeWidth="6">
        <path d="M2 4c10 8 26 8 36 2" />
      </svg>
      <div className="flex items-center border-b-2 border-[#4a7db5] pb-5">
        <div className="flex-1 pt-1 text-[18px] leading-6 font-bold tracking-[1px] text-[#141414]">GLOBAL POWER SOURCE PTE. LTD.</div>
        <div className="text-right text-[13px] leading-[17px]">
          Co. Reg. 200404078N
          <br />
          GST No. 200404078N
        </div>
        <span className="ml-[6px] flex size-5 items-center justify-center rounded-full bg-[#2c62ad] text-[7px] font-bold text-white">GST</span>
        <div className="ml-6 text-right text-[13px] leading-[17px]">
          www.gpsgc.com
          <br />
          connect@gpsgc.com
        </div>
        <span className="ml-[5px] flex size-5 items-center justify-center rounded-full bg-[#2c62ad]">
          <svg viewBox="0 0 14 14" className="size-[14px]" fill="none" stroke="#fff" strokeWidth="1">
            <circle cx="7" cy="7" r="5.500" />
            <path d="M7 1.500v11M1.500 7h11M7 1.500c-4 3-4 8 0 11M7 1.500c4 3 4 8 0 11" />
          </svg>
        </span>
      </div>

      <div className="mt-11">
        <DocTitle title="DRAFT BILL OF LADING" no="B/L NO." value="TBA" />
      </div>

      <div className="mt-[53px] grid grid-cols-[349fr_349fr_360fr] border-b-2 border-[#c8c8c8] pb-[33px] pl-[2px]">
        <Party label="SHIPPER" lines={["Global Power Source Pte Ltd", "140 Robinson Road #10-08", "Tahir Building", "Singapore 068907"]} />
        <Party label="CONSIGNEE" lines={["Fjord Marine AS", "Industriveien 14", "N-6002 Alesund", "Norway"]} />
        <Party label="NOTIFY PARTY" lines={["Nordvolt Elektro AS 7315", "c/o Nordvolt Power Systems Oy", "Teknikkatie 8", "02 150 Espoo", "Finland"]} />
      </div>

      <div className="mt-6 grid grid-cols-[275fr_275fr_253fr_255fr] gap-y-[21px]">
        {DETAILS.map((d) => (
          <Party key={d.label} label={d.label} lines={[d.value]} />
        ))}
      </div>

      <table className="mt-8 w-full text-[18px] leading-[25px] text-[#222]">
        <thead>
          <tr className="border-b-2 border-[#1a1a1a]">
            <th className={TH + " w-10 text-center"}>#</th>
            <th className={TH + " pl-4 text-left"}>DESCRIPTION OF GOODS</th>
            <th className={TH + " w-[124px] pl-1 text-left"}>PACKAGES</th>
            <th className={TH + " w-[160px] text-right"}>GROSS WEIGHT</th>
            <th className={TH + " w-[180px] pr-[15px] text-right"}>MEASUREMENT</th>
          </tr>
        </thead>
        <tbody>
          <tr className="border-b-2 border-[#cfcfcf] align-top">
            <td className="pt-[15px] text-center text-[#a3a3a3]">1</td>
            <td className="pt-[15px] pr-12 pb-3 pl-4">PowerGuard BMS - Fossheim KSB1 &amp; KSB2 (Material APX-Q-NVE-QT-52)</td>
            <td className="pt-[15px] text-center">1 CTN</td>
            <td className="pt-[15px] text-right">62.00 KG</td>
            <td className="pt-[15px] pr-[15px] text-right">0.900 CBM</td>
          </tr>
        </tbody>
      </table>

      <p className="mt-[37px] text-[19px] leading-[29px] text-[#3a3a3a]">
        Received by the Carrier in apparent good order and condition. <strong className="text-[#141414]">DRAFT — NOT NEGOTIABLE</strong>, issued for verification only and subject to
        correction. Country of Origin: <strong className="text-[#141414]">Singapore</strong>.
      </p>

      <div className="mt-[62px] border-t-2 border-[#c8c8c8]">
        <div className="ml-auto w-[310px]">
          <div className={LABEL}>FOR</div>
          <div className="mt-1 text-[17px] leading-6 font-bold whitespace-nowrap">GLOBAL POWER SOURCE PTE LTD</div>
          <div className="mt-[21px] ml-[13px]">
            <QrCode />
          </div>
          <div className="mt-6 border-t-2 border-[#a0a0a0] pt-[5px] text-[14px] leading-5 tracking-[1px] text-[#a3a3a3]">AUTHORISED SIGNATORY</div>
        </div>
      </div>
      <p className="text-center text-[13px] leading-[18px] tracking-[1px] whitespace-pre text-[#a3a3a3]">
        {"Global Power Source Pte Ltd  ·  Co. Reg. No. 200404078N  ·  GST Reg. No. 200404078N  ·  140 Robinson Road #10-08 Tahir Building Singapore 068907"}
      </p>
    </div>
  );
}

const InvoiceIcon = (
  <svg viewBox="0 0 24 30" className="h-[30px] w-6" fill="none" stroke="currentColor" strokeWidth="2.600">
    <path d="M2 2h12l8 8v18H2zM14 2v8h8" />
    <path d="M5 6.500h5M5 10.500h5" strokeWidth="2" />
    <path d="M15.500 15.500h-5v4h4v4H9M12 13.500v12" strokeWidth="2" />
  </svg>
);

const ShipIcon = (
  <svg viewBox="0 0 38 32" className="h-8 w-[38px]" fill="none" stroke="currentColor" strokeWidth="2.600" strokeLinejoin="round">
    <path d="M19 1v6M11 11V6h16v5M9 25 5 14l14-4.500L33 14l-4 11M19 10v15" />
    <path d="M1 29c3.500-2.500 6-2.500 9 0 3 2 6 2 9 0 3 2 6 2 9 0 3-2.500 5.500-2.500 9 0" strokeLinecap="round" />
  </svg>
);

export default function App() {
  return (
    <main className="flex min-h-screen bg-white px-28 pt-[75px] pb-[147px] font-['Inter',sans-serif]">
      <div className="relative flex w-full rounded-[36px] border border-[#1c1c1c] bg-black shadow-[0_36px_80px_rgba(0,0,0,0.55),0_0_4px_rgba(0,0,0,0.4)]">
        <ScheduleWindow />
        <div className="ml-2 flex min-w-0 flex-1 flex-col overflow-hidden rounded-r-[34px]">
          <DocumentWindow
            name="Window 2"
            title="Proforma Invoice GPS-PI-2647"
            meta="GPS-PI-2647.pdf · 1 page · 175 KB"
            icon={InvoiceIcon}
            fab="top-[189px]"
            className="h-[324px] shrink-0"
          >
            <Invoice />
          </DocumentWindow>
          <div className="h-[2px] shrink-0 bg-[#242424]" />
          <DocumentWindow
            name="Window 3"
            title="Draft Bill of Lading"
            meta="DraftBL-4519204873.pdf · 1 page · 126 KB"
            icon={ShipIcon}
            fab="bottom-[194px]"
            className="flex-1"
          >
            <BillOfLading />
          </DocumentWindow>
        </div>
        <div className="pointer-events-none absolute inset-0 rounded-[35px] border-2 border-white/20" />
      </div>
    </main>
  );
}
